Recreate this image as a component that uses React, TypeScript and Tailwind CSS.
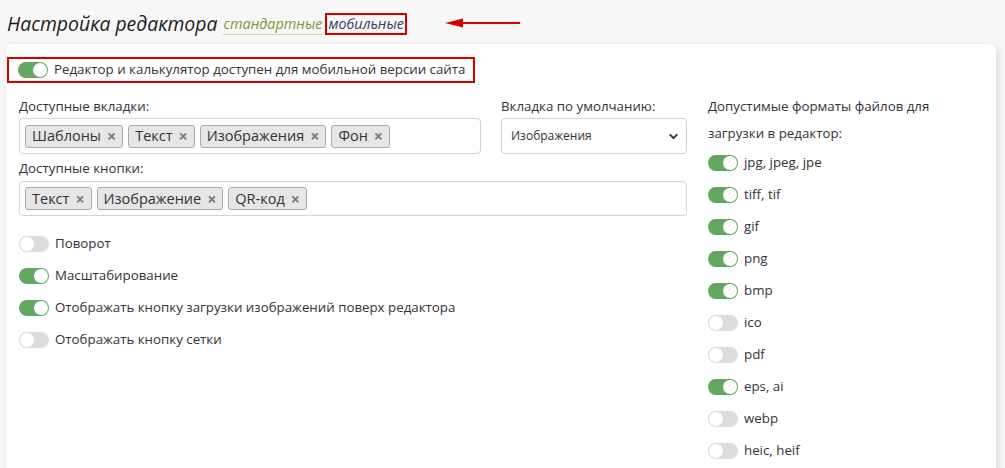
import { ChevronDown } from "lucide-react";

const font = { fontFamily: '"Open Sans", "Noto Sans", sans-serif' };

function Toggle({ on }: { on: boolean }) {
  return (
    <span
      className={
        "relative inline-block w-[30px] h-[16px] rounded-full shrink-0 " +
        (on ? "bg-[#62a862]" : "bg-[#dcdcdc]")
      }
    >
      <span
        className={
          "absolute top-[1px] w-[14px] h-[14px] rounded-full bg-white " +
          (on ? "right-[1px]" : "left-[1px]")
        }
      />
    </span>
  );
}

function Tag({ label }: { label: string }) {
  return (
    <span className="inline-flex items-center h-[23px] px-[6px] gap-[6px] rounded-[3px] border border-[#aaaaaa] bg-[#e6e6e6] text-[14.5px] text-[#333]">
      {label}
      <span className="text-[#7a7a7a] font-bold text-[16px] leading-none">×</span>
    </span>
  );
}

function Row({ on, label }: { on: boolean; label: string }) {
  return (
    <div className="flex items-center h-8 gap-[6px] text-[13.3px] text-[#333] whitespace-nowrap">
      <Toggle on={on} />
      <span>{label}</span>
    </div>
  );
}

const formats: [string, boolean][] = [
  ["jpg, jpeg, jpe", true],
  ["tiff, tif", true],
  ["gif", true],
  ["png", true],
  ["bmp", true],
  ["ico", false],
  ["pdf", false],
  ["eps, ai", true],
  ["webp", false],
  ["heic, heif", false],
];

export default function App() {
  return (
    <div className="h-[468px] overflow-hidden bg-[#f7f7f7]" style={font}>
      {/* Header */}
      <div className="h-[44px] flex items-end pl-[7px] pb-[6px]">
        <h1 className="italic text-[19.4px] leading-7 text-[#1c1c1c]">Настройка редактора</h1>
        <span className="ml-[6px] italic text-[14.4px] text-[#789a33] border-b border-[#c3df98] leading-5 mb-[3px]">
          стандартные
        </span>
        <span className="ml-[3px] italic text-[14.4px] text-[#33405e] border-2 border-[#d40000] px-[1px] leading-[18px] mb-[3px]">
          мобильные
        </span>
        <svg width="76" height="10" viewBox="0 0 76 10" className="ml-[38px] mb-[10px]">
          <path d="M18 5 H75" stroke="#d40000" strokeWidth="2" />
          <path d="M0 5 L18 0.5 L18 9.5 Z" fill="#d40000" />
        </svg>
      </div>

      {/* Card */}
      <div className="ml-[6px] mr-[9px] bg-white rounded-[6px] shadow-[2px_2px_6px_rgba(0,0,0,0.12)] px-[13px] pt-[13px] h-[500px]">
        <div className="-ml-[12px] w-[468px] h-[26px] border-2 border-[#d40000] flex items-center gap-[6px] pl-[9px] text-[13.3px] text-[#333] whitespace-nowrap">
          <Toggle on={true} />
          <span>Редактор и калькулятор доступен для мобильной версии сайта</span>
        </div>

        <div className="flex mt-[10px]">
          {/* Left area */}
          <div className="w-[668px] pt-[3px] text-[13.3px] text-[#333]">
            <div className="grid grid-cols-[462px_186px] gap-x-[20px]">
              <div>
                <div className="leading-5">Доступные вкладки:</div>
                <div className="mt-[2px] h-[36px] border border-[#d4d4d4] rounded-[4px] flex items-center gap-[5px] px-[5px]">
                  <Tag label="Шаблоны" />
                  <Tag label="Текст" />
                  <Tag label="Изображения" />
                  <Tag label="Фон" />
                </div>
              </div>
              <div>
                <div className="leading-5">Вкладка по умолчанию:</div>
                <div className="mt-[2px] h-[36px] border border-[#cfcfcf] rounded-[4px] flex items-center justify-between pl-[9px] pr-[6px] text-[12px] text-[#333]">
                  <span>Изображения</span>
                  <ChevronDown size={13} strokeWidth={3.5} className="text-[#333]" />
                </div>
              </div>
            </div>

            <div className="mt-[4px] leading-5">Доступные кнопки:</div>
            <div className="mt-[3px] h-[35px] border border-[#d4d4d4] rounded-[4px] flex items-center gap-[5px] px-[5px]">
              <Tag label="Текст" />
              <Tag label="Изображение" />
              <Tag label="QR-код" />
            </div>

            <div className="mt-[12px]">
              <Row on={false} label="Поворот" />
              <Row on={true} label="Масштабирование" />
              <Row on={true} label="Отображать кнопку загрузки изображений поверх редактора" />
              <Row on={false} label="Отображать кнопку сетки" />
            </div>
          </div>

          {/* Right column */}
          <div className="ml-[21px] flex-1">
            <div className="text-[13.3px] leading-[27px] text-[#333]">
              Допустимые форматы файлов для
              <br />
              загрузки в редактор:
            </div>
            {formats.map(([label, on]) => (
              <Row key={label} on={on} label={label} />
            ))}
          </div>
        </div>
      </div>
    </div>
  );
}
